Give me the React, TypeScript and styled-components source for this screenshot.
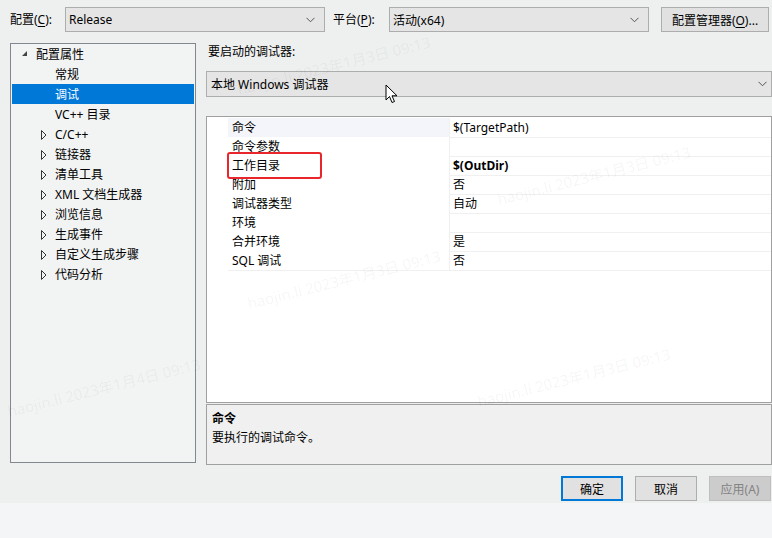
import React from "react";
import styled, { createGlobalStyle } from "styled-components";

const Global = createGlobalStyle`
  html, body { margin: 0; padding: 0; }
  body {
    width: 772px; height: 538px; overflow: hidden;
    background: #f3f5f6;
    font-family: "Noto Sans", "Noto Sans CJK SC", sans-serif;
    font-size: 12px; color: #000;
  }
`;

const Page = styled.div`
  position: relative;
  width: 772px;
  height: 538px;
  overflow: hidden;
`;

const Window = styled.div`
  height: 503px;
  background: #eeefef;
  display: flex;
  flex-direction: column;
  box-sizing: border-box;
  padding: 7px 1px 0 10px;
`;

const TopBar = styled.div`
  display: flex;
  align-items: center;
  height: 25px;
`;

const Label = styled.span<{ $w: number; $pl?: number }>`
  width: ${(p) => p.$w}px;
  padding-left: ${(p) => p.$pl ?? 0}px;
  box-sizing: border-box;
  flex: none;
  line-height: 24px;
  white-space: nowrap;
  u { text-decoration: underline; text-underline-offset: 2px; }
`;

const Select = styled.div<{ $w: number; $h?: number; $pad?: number }>`
  width: ${(p) => p.$w}px;
  height: ${(p) => p.$h ?? 25}px;
  box-sizing: border-box;
  border: 1px solid #adadad;
  background: #e5e5e5;
  display: flex;
  align-items: center;
  justify-content: space-between;
  padding: 0 ${(p) => p.$pad ?? 9}px 0 3px;
  flex: none;
`;

const Chevron = () => (
  <svg width="9" height="6" viewBox="0 0 9 6">
    <path d="M0.5 0.8 L4.5 4.8 L8.5 0.8" fill="none" stroke="#555" strokeWidth="1" />
  </svg>
);

const Button = styled.button<{ $primary?: boolean; $disabled?: boolean; $w?: number }>`
  width: ${(p) => p.$w ?? 62}px;
  height: 25px;
  box-sizing: border-box;
  font: inherit;
  font-size: 12px;
  padding: 0;
  background: ${(p) => (p.$disabled ? "#cccccc" : "#e1e1e1")};
  color: ${(p) => (p.$disabled ? "#838383" : "#000")};
  border: ${(p) => (p.$primary ? "2px solid #0078d7" : p.$disabled ? "1px solid #bfbfbf" : "1px solid #adadad")};
  flex: none;
  u { text-decoration: underline; text-underline-offset: 2px; }
`;

const Spacer = styled.div<{ $w: number }>`
  width: ${(p) => p.$w}px;
  flex: none;
`;

const Main = styled.div`
  display: flex;
  margin-top: 11px;
  gap: 10px;
`;

const Tree = styled.div`
  width: 186px;
  height: 420px;
  box-sizing: border-box;
  border: 1px solid #828790;
  background: #f2f3f3;
  padding: 0 1px;
  flex: none;
`;

const TreeRow = styled.div<{ $selected?: boolean; $indent: number }>`
  height: 20px;
  display: flex;
  align-items: center;
  position: relative;
  padding-left: ${(p) => p.$indent}px;
  background: ${(p) => (p.$selected ? "#0078d7" : "transparent")};
  color: ${(p) => (p.$selected ? "#fff" : "#000")};
  white-space: nowrap;
`;

const Expander = styled.span<{ $open?: boolean }>`
  position: absolute;
  left: ${(p) => (p.$open ? 9 : 29)}px;
  top: 6px;
  width: 8px;
  height: 9px;
  display: flex;
`;

const RightCol = styled.div`
  width: 566px;
  display: flex;
  flex-direction: column;
`;

const SectionLabel = styled.div`
  height: 18px;
  line-height: 18px;
  padding-left: 2px;
`;

const DebuggerSelect = styled(Select)`
  margin-top: 10px;
  padding-left: 4px;
`;

const Grid = styled.div`
  margin-top: 19px;
  height: 287px;
  box-sizing: border-box;
  border: 1px solid #a0a0a0;
  background: #fff;
  padding-top: 1px;
  position: relative;
`;

const GridRow = styled.div`
  display: grid;
  grid-template-columns: 21px 222px 1fr;
  height: 19px;
`;

const Gutter = styled.div`
  background: #fff;
`;

const NameCell = styled.div<{ $active?: boolean }>`
  border-bottom: 1px solid #f0f0f0;
  border-right: 1px solid #f0f0f0;
  padding: 1px 0 0 4px;
  line-height: 18px;
  background: ${(p) => (p.$active ? "#f3f5fa" : "#fff")};
  white-space: nowrap;
`;

const ValueCell = styled.div<{ $bold?: boolean }>`
  border-bottom: 1px solid #f0f0f0;
  padding: 1px 0 0 3px;
  line-height: 18px;
  font-weight: ${(p) => (p.$bold ? 700 : 400)};
  white-space: nowrap;
`;

const Highlight = styled.div`
  position: absolute;
  left: 20px;
  top: 35px;
  width: 95px;
  height: 27px;
  box-sizing: border-box;
  border: 2.5px solid #e8262b;
  border-radius: 3px;
  pointer-events: none;
`;

const Desc = styled.div`
  margin-top: 1px;
  height: 61px;
  box-sizing: border-box;
  border: 1px solid #a0a0a0;
  background: #f0f0f0;
  padding: 4px 5px;
  line-height: 19px;
`;

const DescTitle = styled.div`
  font-weight: 700;
`;

const Footer = styled.div`
  display: flex;
  justify-content: flex-end;
  align-items: center;
  margin-top: 11px;
  gap: 12px;
`;

const Watermark = styled.div<{ $x: number; $y: number }>`
  position: absolute;
  left: ${(p) => p.$x}px;
  top: ${(p) => p.$y}px;
  transform: rotate(-14deg);
  transform-origin: left bottom;
  color: rgba(0, 0, 0, 0.05);
  font-size: 15px;
  white-space: nowrap;
  pointer-events: none;
`;

const Cursor = styled.svg`
  position: absolute;
  left: 385px;
  top: 84px;
  pointer-events: none;
`;

const treeItems: { text: string; level: 0 | 1; expander?: "open" | "closed"; selected?: boolean }[] = [
  { text: "配置属性", level: 0, expander: "open" },
  { text: "常规", level: 1 },
  { text: "调试", level: 1, selected: true },
  { text: "VC++ 目录", level: 1 },
  { text: "C/C++", level: 1, expander: "closed" },
  { text: "链接器", level: 1, expander: "closed" },
  { text: "清单工具", level: 1, expander: "closed" },
  { text: "XML 文档生成器", level: 1, expander: "closed" },
  { text: "浏览信息", level: 1, expander: "closed" },
  { text: "生成事件", level: 1, expander: "closed" },
  { text: "自定义生成步骤", level: 1, expander: "closed" },
  { text: "代码分析", level: 1, expander: "closed" },
];

const props: { name: string; value: string; bold?: boolean }[] = [
  { name: "命令", value: "$(TargetPath)" },
  { name: "命令参数", value: "" },
  { name: "工作目录", value: "$(OutDir)", bold: true },
  { name: "附加", value: "否" },
  { name: "调试器类型", value: "自动" },
  { name: "环境", value: "" },
  { name: "合并环境", value: "是" },
  { name: "SQL 调试", value: "否" },
];

const wm = "haojin.li 2023年1月3日 09:13";

export default function App() {
  return (
    <Page>
      <Global />
      <Window>
        <TopBar>
          <Label $w={55}>配置(<u>C</u>):</Label>
          <Select $w={260}>
            <span>Release</span>
            <Chevron />
          </Select>
          <Label $w={64} $pl={8}>平台(<u>P</u>):</Label>
          <Select $w={260}>
            <span>活动(x64)</span>
            <Chevron />
          </Select>
          <Spacer $w={12} />
          <Button $w={108}>配置管理器(<u>O</u>)...</Button>
        </TopBar>
        <Main>
          <Tree>
            {treeItems.map((it) => (
              <TreeRow key={it.text} $indent={it.level === 0 ? 24 : 43} $selected={it.selected}>
                {it.expander === "open" && (
                  <Expander $open>
                    <svg width="7" height="7" viewBox="0 0 7 7">
                      <path d="M6 1 L6 6 L1 6 Z" fill="#444" />
                    </svg>
                  </Expander>
                )}
                {it.expander === "closed" && (
                  <Expander>
                    <svg width="6" height="10" viewBox="0 0 6 10">
                      <path d="M0.5 0.5 L5 5 L0.5 9.5 Z" fill="none" stroke="#333" strokeWidth="1" />
                    </svg>
                  </Expander>
                )}
                {it.text}
              </TreeRow>
            ))}
          </Tree>
          <RightCol>
            <SectionLabel>要启动的调试器:</SectionLabel>
            <DebuggerSelect $w={566} $h={26} $pad={4}>
              <span>本地 Windows 调试器</span>
              <Chevron />
            </DebuggerSelect>
            <Grid>
              {props.map((p, i) => (
                <GridRow key={p.name}>
                  <Gutter />
                  <NameCell $active={i === 0}>{p.name}</NameCell>
                  <ValueCell $bold={p.bold}>{p.value}</ValueCell>
                </GridRow>
              ))}
              <Highlight />
            </Grid>
            <Desc>
              <DescTitle>命令</DescTitle>
              <div>要执行的调试命令。</div>
            </Desc>
          </RightCol>
        </Main>
        <Footer>
          <Button $primary>确定</Button>
          <Button>取消</Button>
          <Button $disabled>应用(A)</Button>
        </Footer>
      </Window>
      <Watermark $x={240} $y={78}>{wm}</Watermark>
      <Watermark $x={500} $y={188}>{wm}</Watermark>
      <Watermark $x={250} $y={292}>{wm}</Watermark>
      <Watermark $x={10} $y={400}>haojin.li 2023年1月4日 09:13</Watermark>
      <Watermark $x={480} $y={390}>{wm}</Watermark>
      <Cursor width="14" height="21" viewBox="0 0 14 21">
        <path d="M1 1 L1 16 L4.5 12.5 L7 18.5 L9.5 17.5 L7 11.8 L12 11.8 Z" fill="#fff" stroke="#000" strokeWidth="1" strokeLinejoin="miter" />
      </Cursor>
    </Page>
  );
}
